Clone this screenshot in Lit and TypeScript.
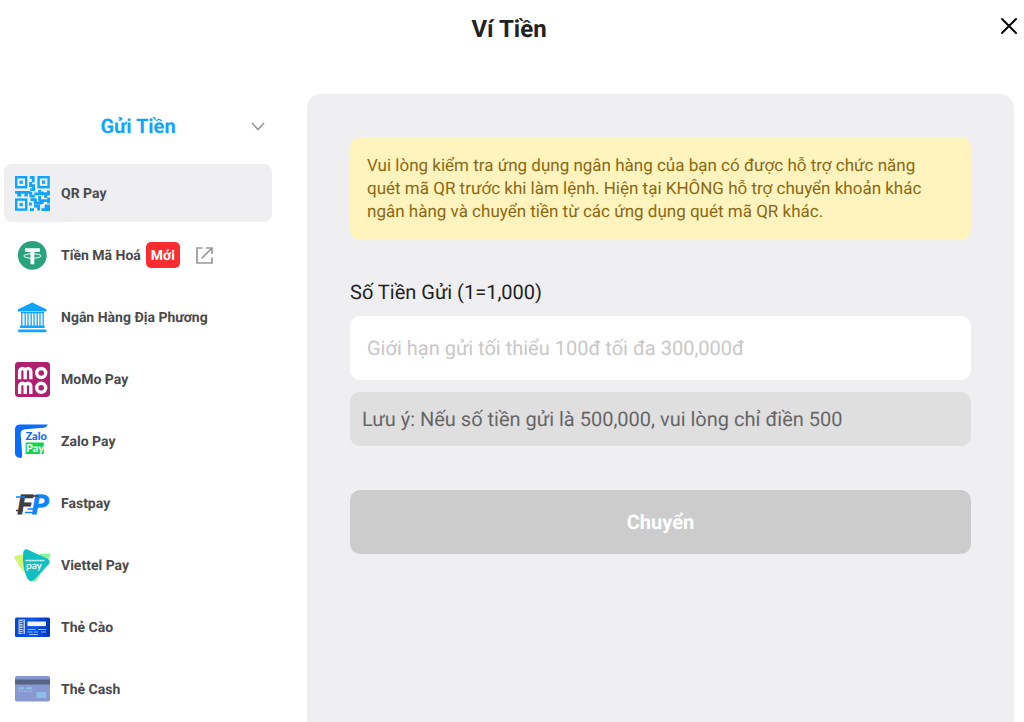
import { LitElement, html, svg, css, type TemplateResult } from "lit";
import { customElement, state } from "lit/decorators.js";

interface Method {
  name: string;
  icon: TemplateResult;
  isNew?: boolean;
}

const icon = (content: unknown) =>
  html`<svg class="logo" viewBox="0 0 35 35" aria-hidden="true">${content}</svg>`;

const finder = (x: number, y: number) => svg`
  <rect x=${x + 1.2} y=${y + 1.2} width="10" height="10" fill="none" stroke="#0fa5ff" stroke-width="2.4"/>
  <rect x=${x + 4.6} y=${y + 4.6} width="3.2" height="3.2" fill="#0fa5ff"/>`;

const qrIcon = icon(svg`
  ${finder(0, 0)}${finder(22.4, 0)}${finder(0, 22.4)}
  <path fill="none" stroke="#0fa5ff" stroke-width="2.8" d="M14.800 1.4h3.400v5M15.600 6v3.600h4.400M18.600 9v4.600h-3.400M0 16.4h15.4M2.200 19h4M9.400 19h3.400M15.800 16v4.200h4M19.400 17.800h5.200v-3.800M27.200 15.600v3.400M27 17.600h8M33.400 14.600v5M30.600 18v4M24.600 20v4.400M15.400 23.600h5v3.400h4.800v-4M15.400 26.600v3M19 30.200h4.600v4.400M15 33.600h4M27 24.600h8M33.600 21.600v6M27.200 24v4M26.400 33.600h4.600v-4.400M30 29.800h4.600M33.600 29v6"/>`);

const tetherIcon = icon(svg`
  <circle cx="17.3" cy="17.3" r="14.4" fill="#29a37c"/>
  <path fill="#fff" d="M10 10.2h14.8v3.7h-5.5v12.4h-3.8V13.9H10z"/>
  <ellipse cx="17.4" cy="18" rx="8.6" ry="2.2" fill="none" stroke="#fff" stroke-width="1"/>`);

const bankIcon = icon(svg`
  <path fill="#0fa5ff" d="M17.3 2.600 31.400 9.200v2.200H3V9.200zM5 25.600h24.600v2.400H5zM3.400 29.400h27.800q1 3-1 2.800H4.400q-2 0-1-2.800z"/>
  <path stroke="#0fa5ff" stroke-width="1.300" d="M6.800 12v14M10.200 12v14M13 12v14M16.200 12v14M19 12v14M22.200 12v14M25 12v14M28.200 12v14M6 12.600h23"/>`);

const momoIcon = icon(svg`
  <rect width="35" height="35" rx="3.4" fill="#b01f70"/>
  <g fill="none" stroke="#fff" stroke-width="3.400">
    <circle cx="26.200" cy="11" r="4.500"/><circle cx="26.200" cy="25.800" r="4.500"/>
    <path d="M4.600 17.2v-7.400a2.800 3.400 0 0 1 5.600 0v7.400M10.200 17.2v-7.400a2.800 3.400 0 0 1 5.600 0v7.400"/>
    <path d="M4.600 32v-7.400a2.800 3.400 0 0 1 5.600 0v7.400M10.200 32v-7.400a2.800 3.400 0 0 1 5.600 0v7.400"/>
  </g>`);

const zaloIcon = icon(svg`
  <path fill="#0a6cff" d="M5 .6h27.800q-1 2.900-4 3.100L10 5.200Q5.800 5.600 5.600 9.500L7.200 31.500Q7.300 34.500 4.600 34 0 33 0 29V5.600Q0 .6 5 .6z"/>
  <text x="10.400" y="15.800" font-size="11" font-weight="900" fill="#0a6cff" class="round">Zalo</text>
  <rect x="10.600" y="18.500" width="18.200" height="11.500" fill="#0bd64c"/>
  <text x="11" y="28" font-size="11" font-weight="900" fill="#fff" class="round">Pay</text>`);

const fastpayIcon = icon(svg`
  <text x="2.500" y="28" font-size="27" font-weight="700" font-style="italic" fill="#3d3d42" stroke="#3d3d42" stroke-width=".8">F</text>
  <text x="17" y="28" font-size="27" font-weight="700" font-style="italic" fill="#0b86fb" stroke="#0b86fb" stroke-width=".8">P</text>
  <path stroke="#3d3d42" stroke-width="1.300" d="M1 24.500h7M16.500 10h7"/>
  <path stroke="#0b86fb" stroke-width="1.300" d="M1 11h9M12.500 23h7M10 26.500h10"/>`);

const viettelIcon = icon(svg`
  <path fill="#d3f573" d="M0 11q-2-2.500 1.500-3.500L13 5l-1 20Q9 25 7 22z"/>
  <path fill="#8bf59a" d="M25 6l9-.600q2.500.600 1 3L22 32q-2 3-4 .500L13 28z"/>
  <path fill="#14bfc1" d="M8.200 4.500Q9 .500 12.500 1.500L32 10.500q4 2 2 5.500L19.500 31.500q-4 3.500-7-.500Q7 20 8.200 4.500z"/>
  <path stroke="#d5f5f4" stroke-width="1.600" stroke-dasharray="2.500 .4" d="M10.500 12.500h19"/>
  <text x="11" y="20.500" font-size="10" font-weight="700" fill="#e8fbfa" class="round">pay</text>`);

const scratchIcon = icon(svg`
  <defs><linearGradient id="g"><stop stop-color="#0648cf"/><stop offset=".5" stop-color="#0a55ef"/><stop offset="1" stop-color="#0436b8"/></linearGradient></defs>
  <rect y="7.500" width="35" height="19.500" rx="1.500" fill="url(#g)"/>
  <path fill="#b5c6ea" d="M3.500 9.500h6.500v14.500H3.500z"/>
  <path stroke="#223d7c" stroke-width=".7" d="M4.500 11.500h3M4.500 13.500h4M4.500 16h3M4.500 18.500h4M4.500 20.500h3M4.500 22.500h4M8 10v14"/>
  <path fill="#f0f4fc" d="M12.500 11.500h18.500v4.600H12.500z"/>
  <path stroke="#91bcff" stroke-width="1" d="M12.500 19.500h8M23 19.500h8M12.500 22h5M19 22h4M26 22h5M14 24.500h9"/>`);

const cashIcon = icon(svg`
  <rect y="4" width="35" height="25.500" rx="1.800" fill="#8798d3"/>
  <path fill="#566383" d="M0 7.500h35v5H0z"/>
  <path fill="#8cc0e6" d="M3.200 15.300h6v2h-6zM10.800 15.300h6.500v2h-6.500zM21.500 20h9.500v6h-9.500z"/>
  <path stroke="#a5b5e2" stroke-width="1.600" stroke-dasharray="2 1" d="M3.200 19.300h14.800"/>`);

const methods: Method[] = [
  { name: "QR Pay", icon: qrIcon },
  { name: "Tiền Mã Hoá", icon: tetherIcon, isNew: true },
  { name: "Ngân Hàng Địa Phương", icon: bankIcon },
  { name: "MoMo Pay", icon: momoIcon },
  { name: "Zalo Pay", icon: zaloIcon },
  { name: "Fastpay", icon: fastpayIcon },
  { name: "Viettel Pay", icon: viettelIcon },
  { name: "Thẻ Cào", icon: scratchIcon },
  { name: "Thẻ Cash", icon: cashIcon },
];

@customElement("app-root")
export class AppRoot extends LitElement {
  @state() private selected = 0;

  static styles = css`
    :host {
      display: flex;
      flex-direction: column;
      height: 100vh;
      overflow: hidden;
      background: #fff;
      color: #222;
      font-family: Roboto, "Noto Sans", sans-serif;
      text-rendering: geometricPrecision;
    }
    * { box-sizing: border-box; }
    button, input { font: inherit; border: 0; text-rendering: inherit; }
    button { background: none; padding: 0; cursor: pointer; }
    .header {
      display: grid;
      grid-template-columns: 1fr auto 1fr;
      align-items: start;
      padding: 11px 6px 0 0;
      margin-bottom: 47px;
    }
    .title {
      grid-column: 2;
      margin: 0;
      font-size: 24px;
      line-height: 36px;
      font-weight: 700;
    }
    .close { justify-self: end; display: flex; height: 30px; align-items: center; }
    .close svg { width: 18px; height: 18px; }
    .body {
      flex: 1;
      min-height: 0;
      display: grid;
      grid-template-columns: 268px minmax(0, 1fr);
      gap: 35px;
      padding: 0 10px 0 4px;
    }
    .group {
      display: grid;
      grid-template-columns: 14px 1fr 14px;
      align-items: center;
      width: 100%;
      height: 64px;
      padding: 0 7px;
      margin-bottom: 6px;
      color: #0fa5ff;
      font-size: 20px;
      font-weight: 700;
    }
    .group span { grid-column: 2; }
    .group svg { width: 14px; height: 9px; }
    .methods { list-style: none; margin: 0; padding: 0; display: grid; gap: 4px; }
    .method {
      display: flex;
      align-items: center;
      width: 100%;
      height: 58px;
      padding: 0 11px;
      border-radius: 8px;
      color: #4a4a4a;
      font-size: 14px;
      font-weight: 700;
      text-align: left;
    }
    .method.active { background: #efeff1; }
    .logo { width: 35px; height: 35px; margin-right: 11px; overflow: visible; flex: none; }
    .round { font-family: Lato, sans-serif; }
    .name { padding-top: 2px; }
    .badge {
      margin: 0 16px 0 5px;
      padding: 2px 5px 0;
      border-radius: 5px;
      background: #fc2c31;
      color: #fff;
      line-height: 24px;
    }
    .external { width: 17px; height: 17px; }
    .panel {
      padding: 43px;
      border-radius: 14px 14px 0 0;
      background: #efeff1;
      display: flex;
      flex-direction: column;
    }
    .alert {
      margin: 0 0 40px;
      padding: 18px 32px 16px 17px;
      border-radius: 10px;
      background: #fff3be;
      color: #8a6914;
      font-size: 17px;
      line-height: 23px;
    }
    .label { font-size: 20px; line-height: 24px; margin-bottom: 12px; }
    .amount {
      width: 100%;
      height: 64px;
      padding: 0 17px;
      border-radius: 10px;
      background: #fff;
      color: #222;
      font-size: 20px;
    }
    .amount::placeholder { color: #c8c8c8; opacity: 1; }
    .note {
      margin: 12px 0 44px;
      padding: 0 12px;
      border-radius: 10px;
      background: #dfdfdf;
      color: #666;
      font-size: 20px;
      line-height: 54px;
    }
    .submit {
      height: 64px;
      border-radius: 10px;
      background: #ccc;
      color: #fff;
      font-size: 20px;
      font-weight: 700;
    }
  `;

  render() {
    return html`
      <header class="header">
        <h1 class="title">Ví Tiền</h1>
        <button class="close" aria-label="Đóng">
          <svg viewBox="0 0 18 18" fill="none" stroke="#000" stroke-width="2" stroke-linecap="round"><path d="m2 2 14 14M16 2 2 16"/></svg>
        </button>
      </header>
      <div class="body">
        <nav>
          <button class="group" aria-expanded="true">
            <span>Gửi Tiền</span>
            <svg viewBox="0 0 14 9" fill="none" stroke="#999" stroke-width="1.6"><path d="m1 1 6 6.500L13 1"/></svg>
          </button>
          <ul class="methods">
            ${methods.map(
              (m, i) => html`<li>
                <button class="method ${i === this.selected ? "active" : ""}" @click=${() => (this.selected = i)}>
                  ${m.icon}<span class="name">${m.name}</span>
                  ${m.isNew
                    ? html`<span class="badge">Mới</span>
                        <svg class="external" viewBox="0 0 17 17" fill="none" stroke="#999" stroke-width="1.700"><path d="M6.500 1H1v15h15v-5.500M10 1h6v6M16 1 5.500 11.500"/></svg>`
                    : ""}
                </button>
              </li>`
            )}
          </ul>
        </nav>
        <main class="panel">
          <p class="alert">Vui lòng kiểm tra ứng dụng ngân hàng của bạn có được hỗ trợ chức năng quét mã QR trước khi làm lệnh. Hiện tại KHÔNG hỗ trợ chuyển khoản khác ngân hàng và chuyển tiền từ các ứng dụng quét mã QR khác.</p>
          <label class="label" for="amount">Số Tiền Gửi (1=1,000)</label>
          <input class="amount" id="amount" inputmode="numeric" placeholder="Giới hạn gửi tối thiểu 100đ tối đa 300,000đ" />
          <div class="note">Lưu ý: Nếu số tiền gửi là 500,000, vui lòng chỉ điền 500</div>
          <button class="submit">Chuyển</button>
        </main>
      </div>
    `;
  }
}
